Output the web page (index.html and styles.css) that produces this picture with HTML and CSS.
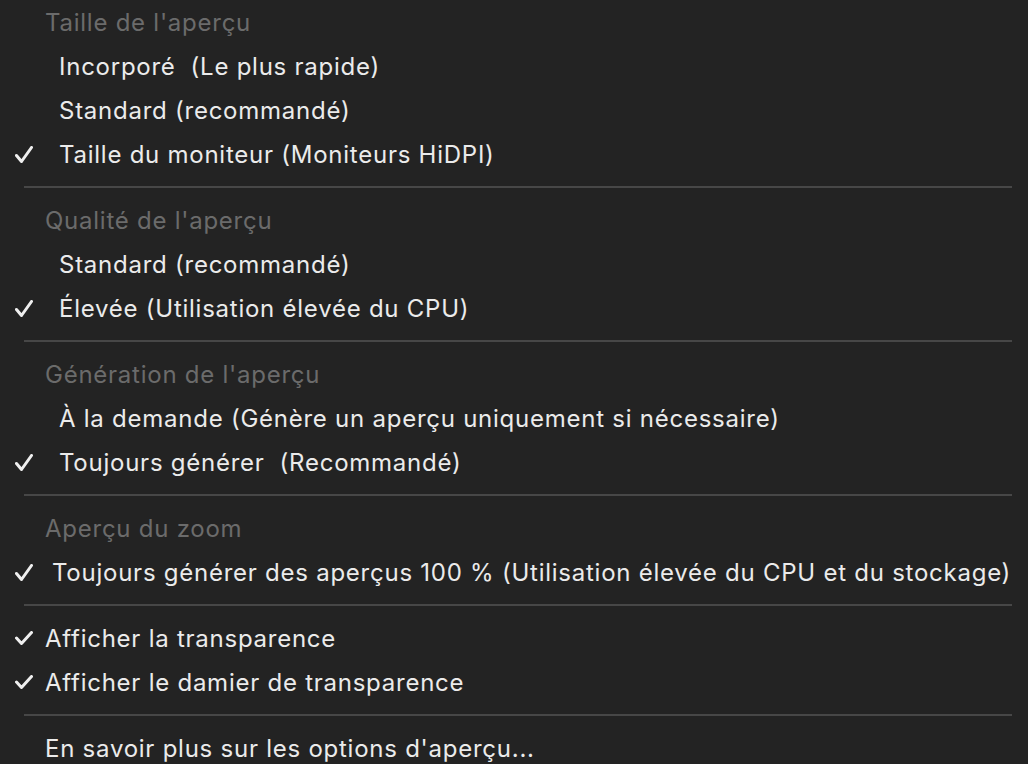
FILE: index.html
```html
<!DOCTYPE html>
<html lang="fr">
<head>
<meta charset="utf-8">
<link rel="stylesheet" href="styles.css">
</head>
<body>
<div class="menu">
  <div class="header">Taille de l'aperçu</div>
  <div class="item sub"><span class="check"></span><span class="label">Incorporé&nbsp; (Le plus rapide)</span></div>
  <div class="item sub"><span class="check"></span><span class="label">Standard (recommandé)</span></div>
  <div class="item sub"><span class="check"><svg viewBox="0 0 18 17"><path d="M1.5 9.5 L6.5 15.5 L16.5 1.5"/></svg></span><span class="label">Taille du moniteur (Moniteurs HiDPI)</span></div>
  <div class="sep"></div>
  <div class="header">Qualité de l'aperçu</div>
  <div class="item sub"><span class="check"></span><span class="label">Standard (recommandé)</span></div>
  <div class="item sub"><span class="check"><svg viewBox="0 0 18 17"><path d="M1.5 9.5 L6.5 15.5 L16.5 1.5"/></svg></span><span class="label">Élevée (Utilisation élevée du CPU)</span></div>
  <div class="sep"></div>
  <div class="header">Génération de l'aperçu</div>
  <div class="item sub"><span class="check"></span><span class="label">À la demande (Génère un aperçu uniquement si nécessaire)</span></div>
  <div class="item sub"><span class="check"><svg viewBox="0 0 18 17"><path d="M1.5 9.5 L6.5 15.5 L16.5 1.5"/></svg></span><span class="label">Toujours générer&nbsp; (Recommandé)</span></div>
  <div class="sep"></div>
  <div class="header">Aperçu du zoom</div>
  <div class="item mid"><span class="check"><svg viewBox="0 0 18 17"><path d="M1.5 9.5 L6.5 15.5 L16.5 1.5"/></svg></span><span class="label">Toujours générer des aperçus 100 % (Utilisation élevée du CPU et du stockage)</span></div>
  <div class="sep"></div>
  <div class="item"><span class="check small"><svg viewBox="0 0 18 14"><path d="M1.5 7 L6.5 12.5 L16.5 1.5"/></svg></span><span class="label">Afficher la transparence</span></div>
  <div class="item"><span class="check small"><svg viewBox="0 0 18 14"><path d="M1.5 7 L6.5 12.5 L16.5 1.5"/></svg></span><span class="label">Afficher le damier de transparence</span></div>
  <div class="sep"></div>
  <div class="item"><span class="check"></span><span class="label">En savoir plus sur les options d'aperçu...</span></div>
</div>
</body>
</html>
```
FILE: styles.css
```css
html, body {
  margin: 0;
  padding: 0;
  background: #232323;
}
body {
  width: 1028px;
  height: 764px;
  overflow: hidden;
  font-family: "Inter", "Liberation Sans", sans-serif;
  font-size: 24px;
  letter-spacing: 0.75px;
  color: #ebebeb;
}
.menu {
  display: flex;
  flex-direction: column;
}
.header {
  height: 44px;
  display: flex;
  align-items: center;
  padding-left: 45px;
  color: #6b6b6b;
  white-space: nowrap;
}
.item {
  height: 44px;
  display: flex;
  align-items: center;
  padding-left: 15px;
  white-space: nowrap;
}
.check {
  width: 30px;
  height: 17px;
  display: flex;
  align-items: center;
  flex-shrink: 0;
}
.item.sub .check { width: 44px; }
.item.mid .check { width: 37px; }
.check svg {
  width: 18px;
  height: 17px;
  fill: none;
  stroke: #efefef;
  stroke-width: 3;
  stroke-linecap: round;
  stroke-linejoin: round;
}
.check.small svg {
  height: 14px;
}
.sep {
  height: 22px;
  display: flex;
  align-items: center;
  padding-left: 24px;
  padding-right: 16px;
}
.sep::before {
  content: "";
  display: block;
  height: 2px;
  flex: 1;
  background: #474747;
}
```
